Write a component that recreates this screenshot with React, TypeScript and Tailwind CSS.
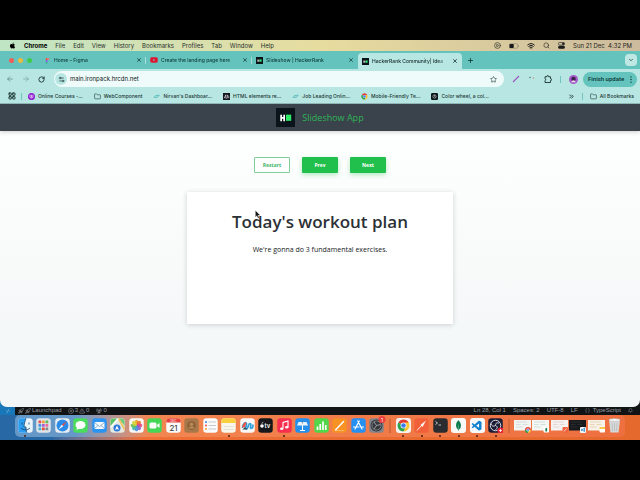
import type { ReactNode } from "react";
import {
    ArrowLeft,
    ArrowRight,
    Bell,
    Braces,
    ChevronDown,
    ChevronsRight,
    CirclePlay,
    CircleX,
    Folder,
    LayoutGrid,
    Plus,
    RadioTower,
    Rocket,
    RotateCw,
    Search,
    Settings2,
    Star,
    TriangleAlert,
    Wifi,
    X,
} from "lucide-react";
import { FaApple, FaYoutube } from "react-icons/fa";
import { SiMongodb } from "react-icons/si";
import { VscRemote, VscVscode } from "react-icons/vsc";

const menus = ["File", "Edit", "View", "History", "Bookmarks", "Profiles", "Tab", "Window", "Help"];

function HackerRankIcon({ className }: { className: string }) {
    return (
        <svg viewBox="0 0 20 20" className={className} aria-hidden="true">
            <rect width="20" height="20" fill="#0c141b" />
            <path d="M5.4 7v7M8.6 7v7M5 10.5h4" stroke="#fff" strokeWidth="1.8" fill="none" />
            <rect x="10.5" y="7" width="5.5" height="6.5" fill="#2eea67" />
        </svg>
    );
}

function FigmaIcon() {
    return (
        <svg viewBox="0 0 8 8" className="size-[7px] shrink-0" aria-hidden="true">
            <path d="M4 1H3a1.2 1.2 0 000 2.4h1z" fill="#f0503c" />
            <path d="M4 1h1a1.2 1.2 0 010 2.4H4z" fill="#f4727f" />
            <path d="M4 3.4H3a1.1 1.1 0 000 2.2h1z" fill="#8a5be8" />
            <circle cx="3" cy="6.6" r="1" fill="#35a97d" />
        </svg>
    );
}

function ChromeIcon({ className }: { className: string }) {
    return (
        <svg viewBox="0 0 24 24" className={className} aria-hidden="true">
            <path d="M12 12L2.5 6.5A11 11 0 0121.5 6.5z" fill="#e33b2e" />
            <path d="M2.5 6.5A11 11 0 0012 23l5-8-5-3z" fill="#2ba24c" />
            <path d="M21.5 6.5A11 11 0 0112 23l5-9-2-7.5z" fill="#fcc934" />
            <circle cx="12" cy="12" r="5.4" fill="#fff" />
            <circle cx="12" cy="12" r="4.2" fill="#3b7ded" />
        </svg>
    );
}

function Swoosh() {
    return (
        <svg viewBox="0 0 8 8" className="size-[7px] shrink-0" fill="none" aria-hidden="true">
            <path d="M1 5.5C2 2.5 4 3 7 2.5 6 5 4 5.2 2 5" stroke="#4fb9b8" />
        </svg>
    );
}

const tabs = [
    { title: "Home – Figma", icon: <FigmaIcon />, active: false },
    { title: "Create the landing page here", icon: <FaYoutube className="size-[8px] shrink-0 text-[#e0142f]" />, active: false },
    { title: "Slideshow | HackerRank", icon: <HackerRankIcon className="size-[7px] shrink-0" />, active: false },
    { title: "HackerRank Community| Idea", icon: <HackerRankIcon className="size-[7px] shrink-0" />, active: true },
];

const bookmarks = [
    {
        title: "Online Courses -...",
        icon: (
            <svg viewBox="0 0 8 8" className="size-[7px] shrink-0" aria-hidden="true">
                <circle cx="4" cy="4" r="4" fill="#8c1bd0" />
                <path d="M2.3 2v2a1.7 1.7 0 003.4 0V2M4 2v3" stroke="#fff" strokeWidth="0.8" fill="none" />
            </svg>
        ),
    },
    { title: "WebComponent", icon: <Folder className="size-[7px] shrink-0" /> },
    { title: "Nirvan's Dashboar...", icon: <Swoosh /> },
    {
        title: "HTML elements re...",
        icon: (
            <svg viewBox="0 0 8 8" className="size-[7px] shrink-0" aria-hidden="true">
                <rect width="8" height="8" fill="#15161c" />
                <path d="M1.4 6l1.8-4v4h1.2M5 6V2.2l1.6 2v1.8" stroke="#dde" strokeWidth="0.8" fill="none" />
            </svg>
        ),
    },
    { title: "Job Leading Onlin...", icon: <Swoosh /> },
    { title: "Mobile-Friendly Te...", icon: <ChromeIcon className="size-[7px] shrink-0" /> },
    {
        title: "Color wheel, a col...",
        icon: (
            <svg viewBox="0 0 8 8" className="size-[7px] shrink-0" aria-hidden="true">
                <rect width="8" height="8" rx="1.4" fill="#0d1417" />
                <circle cx="4" cy="4" r="1.9" fill="none" stroke="#c8d6d6" strokeWidth="0.7" />
                <path d="M4 2v2l1.5 1" stroke="#c8d6d6" strokeWidth="0.6" fill="none" />
            </svg>
        ),
    },
];

// rounded tile that every dock app is drawn on
function Tile({ fill, children }: { fill: string; children?: ReactNode }) {
    return (
        <svg viewBox="0 0 30 30" className="size-[15px]" aria-hidden="true">
            <rect x="0.5" y="0.5" width="29" height="29" rx="6.5" fill={fill} />
            {children}
        </svg>
    );
}

const launchpadColors = ["#e8504b", "#f2a03b", "#5dba55", "#4a90e2", "#a25bd0", "#ec6a9b", "#45b6c9", "#e84c3d", "#7f8c8d"];
const petals = ["#f6a21b", "#f06a2c", "#e2447e", "#9b59c9", "#4a87dd", "#3fb6b0", "#69bd4c", "#d8d43c"];

const apps = [
    {
        name: "Finder",
        running: true,
        icon: (
            <Tile fill="#e9f4fb">
                <path d="M16 .5H7A6.5 6.5 0 00.5 7v16A6.5 6.5 0 007 29.5h11c-2-4-2-8-2-11h-4c0-7 2-13 4-18z" fill="#2a9df0" />
                <path d="M8 9v4M22 9v4M6 20c5 5 13 5 18 0M16 1c-2 5-4 11-4 17h4c0 4 0 8 2 11" stroke="#16406b" strokeWidth="1.6" fill="none" />
            </Tile>
        ),
    },
    {
        name: "Launchpad",
        running: false,
        icon: (
            <Tile fill="#dfe4ea">
                {launchpadColors.map((color, i) => (
                    <rect key={color} x={5 + (i % 3) * 7} y={5 + Math.floor(i / 3) * 7} width="5.5" height="5.5" rx="1.2" fill={color} />
                ))}
            </Tile>
        ),
    },
    {
        name: "Safari",
        running: false,
        icon: (
            <Tile fill="#e8eef4">
                <circle cx="15" cy="15" r="12" fill="#2b8be8" />
                <path d="M23 7l-6.5 9.5-3-3z" fill="#ee4a3e" />
                <path d="M7 23l6.5-9.5 3 3z" fill="#fff" />
            </Tile>
        ),
    },
    {
        name: "Messages",
        running: false,
        icon: (
            <Tile fill="#4bdb5d">
                <ellipse cx="15" cy="14" rx="10" ry="8" fill="#fff" />
                <path d="M8 18l-1 6 6-3z" fill="#fff" />
            </Tile>
        ),
    },
    {
        name: "Mail",
        running: false,
        icon: (
            <Tile fill="#2b93f0">
                <rect x="5" y="8" width="20" height="14" rx="2" fill="#f5f8fb" />
                <path d="M5 9l10 8 10-8M5 21l7-6M25 21l-7-6" stroke="#5a93c9" strokeWidth="1.4" fill="none" />
            </Tile>
        ),
    },
    {
        name: "Maps",
        running: false,
        icon: (
            <Tile fill="#e5e9df">
                <path d="M1 7A6 6 0 017 1h7L1 16z" fill="#5cc467" />
                <path d="M18 1h5a6 6 0 016 6v9z" fill="#72c97a" />
                <path d="M17 1l12 22" stroke="#f3c04b" strokeWidth="3" />
                <path d="M1 19L16 2" stroke="#fff" strokeWidth="3" />
                <circle cx="14" cy="20" r="7" fill="#2c78dd" />
                <path d="M14 15l4 9-4-2-4 2z" fill="#fff" />
            </Tile>
        ),
    },
    {
        name: "Photos",
        running: false,
        icon: (
            <Tile fill="#f7f7f5">
                {petals.map((color, i) => (
                    <ellipse key={color} cx="15" cy="9" rx="3.8" ry="5.6" fill={color} opacity="0.88" transform={`rotate(${i * 45} 15 15)`} />
                ))}
            </Tile>
        ),
    },
    {
        name: "FaceTime",
        running: false,
        icon: (
            <Tile fill="#45d658">
                <rect x="5" y="9" width="14" height="12" rx="3" fill="#fff" />
                <path d="M20 14l5-4v10l-5-4z" fill="#fff" />
            </Tile>
        ),
    },
    {
        name: "Calendar",
        running: false,
        icon: (
            <Tile fill="#fafafa">
                <path d="M.5 9V7A6.5 6.5 0 017 .5h16A6.5 6.5 0 0129.5 7v2z" fill="#e5403b" />
                <text x="15" y="7.5" fontSize="6" textAnchor="middle" fill="#fff" fontFamily="Inter, sans-serif">DEC</text>
                <text x="15" y="25" fontSize="16" textAnchor="middle" fill="#333" fontFamily="Inter, sans-serif">21</text>
            </Tile>
        ),
    },
    {
        name: "Contacts",
        running: false,
        icon: (
            <Tile fill="#a9784a">
                <circle cx="15" cy="15" r="9" fill="#8e6238" />
                <circle cx="15" cy="12.5" r="3.4" fill="#b98b59" />
                <path d="M9 21c1-6 11-6 12 0z" fill="#b98b59" />
            </Tile>
        ),
    },
    {
        name: "Reminders",
        running: false,
        icon: (
            <Tile fill="#fbfbfb">
                <path d="M11 8h15M11 15h15M11 22h15" stroke="#b9bcc0" strokeWidth="1.6" />
                <circle cx="6" cy="8" r="2" fill="#3585ee" />
                <circle cx="6" cy="15" r="2" fill="#ec4b41" />
                <circle cx="6" cy="22" r="2" fill="#f3a33b" />
            </Tile>
        ),
    },
    {
        name: "Notes",
        running: true,
        icon: (
            <Tile fill="#f8f5ea">
                <path d="M.5 10V7A6.5 6.5 0 017 .5h16A6.5 6.5 0 0129.5 7v3z" fill="#f9cf3f" />
                <path d="M5 17h20M5 23h20" stroke="#d0cbbd" />
            </Tile>
        ),
    },
    {
        name: "Freeform",
        running: false,
        icon: (
            <Tile fill="#f8f8f8">
                <path d="M5 20c0-9 7-13 8-9s-4 11 0 11 3-11 7-11-1 10 2 10 4-3 4-8" stroke="#2f9fd8" strokeWidth="3.4" fill="none" />
                <path d="M4 19c1-8 6-12 9-10l-3 9z" fill="#e9574a" />
                <path d="M5 23l5-5 5 5z" fill="#3a4a5a" />
            </Tile>
        ),
    },
    {
        name: "TV",
        running: false,
        icon: (
            <Tile fill="#16171a">
                <circle cx="8" cy="16" r="3.6" fill="#fff" />
                <path d="M8 11.5c0-2 1-3 2.5-3" stroke="#fff" strokeWidth="1.4" fill="none" />
                <text x="13" y="20" fontSize="12" fontWeight="600" fill="#fff" fontFamily="Inter, sans-serif">tv</text>
            </Tile>
        ),
    },
    {
        name: "Music",
        running: true,
        icon: (
            <Tile fill="#f62f4f">
                <path d="M12 21V9l10-3v12" stroke="#fff" strokeWidth="2.2" fill="none" />
                <ellipse cx="9.5" cy="21.5" rx="3.3" ry="2.7" fill="#fff" />
                <ellipse cx="19.5" cy="18.5" rx="3.3" ry="2.7" fill="#fff" />
            </Tile>
        ),
    },
    {
        name: "Keynote",
        running: false,
        icon: (
            <Tile fill="#2490ed">
                <path d="M7 8h16l3 7H4z" fill="#e9f3fb" />
                <path d="M15 14v10M10 25h10" stroke="#fff" strokeWidth="2.2" />
                <path d="M15 6v5" stroke="#67788a" strokeWidth="1.6" />
            </Tile>
        ),
    },
    {
        name: "Numbers",
        running: false,
        icon: (
            <Tile fill="#52d64a">
                <path d="M7 24v-7M12.5 24V12M18 24V7M23.5 24V14" stroke="#fff" strokeWidth="3.4" />
            </Tile>
        ),
    },
    {
        name: "Pages",
        running: false,
        icon: (
            <Tile fill="#f79225">
                <path d="M7 24L23 7" stroke="#fff" strokeWidth="2.8" strokeLinecap="round" />
                <path d="M6 25h18" stroke="#fcc681" strokeWidth="1.4" />
            </Tile>
        ),
    },
    {
        name: "App Store",
        running: false,
        icon: (
            <Tile fill="#2590f2">
                <path d="M16.5 6L8 22M13.5 6L22 22M5 18h11M20 18h5" stroke="#fff" strokeWidth="2.4" strokeLinecap="round" />
            </Tile>
        ),
    },
    {
        name: "System Settings",
        running: false,
        icon: (
            <svg viewBox="0 0 30 30" className="size-[15px] overflow-visible" aria-hidden="true">
                <rect x="0.5" y="0.5" width="29" height="29" rx="6.5" fill="#81858b" />
                <circle cx="15" cy="15" r="12" fill="#34373b" />
                <circle cx="15" cy="15" r="9" fill="none" stroke="#a4a8ad" strokeWidth="2" strokeDasharray="2 1" />
                <path d="M15 15l8-2M15 15l-5 7M15 15l-5-7" stroke="#a4a8ad" strokeWidth="1.8" />
                <circle cx="26" cy="3" r="7" fill="#ea3d3c" />
                <text x="26" y="7" fontSize="10" textAnchor="middle" fill="#fff" fontFamily="Inter, sans-serif">1</text>
            </svg>
        ),
    },
];

const openApps = [
    {
        name: "Chrome",
        running: true,
        icon: (
            <div className="flex size-[15px] items-center justify-center rounded-[3px] bg-[#f4f3f1]">
                <ChromeIcon className="size-[13px]" />
            </div>
        ),
    },
    {
        name: "Postman",
        running: true,
        icon: (
            <Tile fill="#f2603a">
                <path d="M6 25l9-10" stroke="#fff" strokeWidth="1.8" />
                <path d="M13 14L24 5l-7 13z" fill="#fff" />
            </Tile>
        ),
    },
    {
        name: "Terminal",
        running: true,
        icon: (
            <Tile fill="#2a2c2f">
                <path d="M5 7l4 3-4 3M11 14h5" stroke="#e6e6e6" strokeWidth="1.6" fill="none" />
            </Tile>
        ),
    },
    {
        name: "MongoDB Compass",
        running: true,
        icon: (
            <div className="flex size-[15px] items-center justify-center rounded-[3px] bg-[#f8f8f6]">
                <SiMongodb className="size-[11px] text-[#0c7a4b]" />
            </div>
        ),
    },
    {
        name: "Visual Studio Code",
        running: true,
        icon: (
            <div className="flex size-[15px] items-center justify-center rounded-[3px] bg-[#f6f8fa]">
                <VscVscode className="size-[12px] text-[#1181cd]" />
            </div>
        ),
    },
    {
        name: "OBS",
        running: true,
        icon: (
            <Tile fill="#1c1d35">
                <circle cx="15" cy="15" r="10.5" fill="none" stroke="#d9dbe4" strokeWidth="2" />
                <path d="M15 15c0-5 4-7 7-4M15 15c5 2 4 7 0 8M15 15c-5 3-9 0-8-4" stroke="#d9dbe4" strokeWidth="2" fill="none" />
                <circle cx="25" cy="25" r="6" fill="#e52535" />
                <path d="M25 22v6M22 25h6" stroke="#fff" strokeWidth="1.6" />
            </Tile>
        ),
    },
];

// minimised windows, each with the badge of its app
function Thumb({ fill, line, badge }: { fill: string; line: string; badge: ReactNode }) {
    return (
        <svg viewBox="0 0 34 30" className="h-[15px] w-[17px] overflow-visible" aria-hidden="true">
            <rect y="4" width="34" height="21" fill={fill} />
            <path d="M4 8h22M4 13h9M17 13h10M4 18h13" stroke={line} strokeWidth="1.2" />
            {badge}
        </svg>
    );
}

const windows = [
    {
        name: "Chrome window",
        icon: (
            <Thumb fill="#f3f5f2" line="#c5cccc" badge={
                <g>
                    <circle cx="28" cy="24" r="6" fill="#e5473b" />
                    <path d="M22 24a6 6 0 006 6l3-6z" fill="#2ba24c" />
                    <path d="M28 30a6 6 0 006-6h-4z" fill="#fcc934" />
                    <circle cx="28" cy="24" r="2.6" fill="#3b7ded" stroke="#fff" />
                </g>
            } />
        ),
    },
    {
        name: "MongoDB Compass window",
        icon: (
            <Thumb fill="#f5f7f5" line="#b9cfc8" badge={
                <g>
                    <rect x="23" y="18" width="11" height="11" rx="2" fill="#fff" />
                    <ellipse cx="28.5" cy="23.5" rx="2" ry="4" fill="#17835a" />
                </g>
            } />
        ),
    },
    {
        name: "Postman window",
        icon: (
            <Thumb fill="#f5f3f1" line="#d9c5bd" badge={
                <g>
                    <rect x="23" y="18" width="11" height="11" rx="2" fill="#f2633d" />
                    <path d="M26 27l5-6" stroke="#fff" strokeWidth="1.4" />
                </g>
            } />
        ),
    },
    {
        name: "Code window",
        icon: (
            <Thumb fill="#17191c" line="#33373b" badge={
                <g>
                    <rect x="22" y="18" width="12" height="12" rx="2" fill="#f3f7fa" />
                    <path d="M24 22l7 5v-7l-7 6" stroke="#1b84c7" strokeWidth="1.6" fill="none" />
                </g>
            } />
        ),
    },
    {
        name: "Notes window",
        icon: (
            <Thumb fill="#f6f2ea" line="#e2bd86" badge={
                <g>
                    <rect x="23" y="18" width="11" height="11" rx="2" fill="#fff" />
                    <path d="M23 18h11v4H23z" fill="#f8c94a" />
                </g>
            } />
        ),
    },
];

function DockItem({ name, running, children }: { name: string; running?: boolean; children: ReactNode }) {
    return (
        <button aria-label={name} className="flex min-w-0 flex-1 flex-col items-center gap-[2px] pt-[3px]">
            {children}
            <span className={running ? "size-[2px] rounded-full bg-[#4c1d12]" : "size-[2px]"} />
        </button>
    );
}

function MenuBar() {
    return (
        <div className="flex h-[11px] items-center bg-linear-to-r from-[#bfe5c5] via-[#e7dc9f] to-[#cdbb9d] pr-2 pl-[9px] text-[6px] leading-none text-[#27302c]">
            <FaApple className="mr-2 size-[7px] text-black" />
            <nav className="flex items-center gap-2">
                <span className="font-bold text-black">Chrome</span>
                {menus.map((menu) => (
                    <span key={menu}>{menu}</span>
                ))}
            </nav>
            <div className="ml-auto flex items-center gap-2 text-[#1d1f1f]">
                <CirclePlay className="size-[7px]" />
                <svg viewBox="0 0 20 12" className="h-[6px] w-[10px]" fill="none" aria-hidden="true">
                    <rect x="0.5" y="1.5" width="17" height="9" rx="2.5" stroke="#7d7767" />
                    <rect x="1" y="2" width="8.5" height="8" rx="1.5" fill="#17191a" />
                    <path d="M19 4.500v3" stroke="#7d7767" strokeWidth="1.4" />
                </svg>
                <Wifi className="size-[8px]" strokeWidth={3} />
                <Search className="size-[7px]" />
                <svg viewBox="0 0 14 14" className="size-[7px]" fill="none" stroke="currentColor" aria-hidden="true">
                    <rect x="0.7" y="1" width="12.6" height="5" rx="2.5" strokeWidth="1.2" />
                    <rect x="0.7" y="8" width="12.6" height="5" rx="2.5" fill="currentColor" strokeWidth="1.2" />
                    <circle cx="10.500" cy="3.500" r="1.8" fill="currentColor" />
                </svg>
                <span className="whitespace-pre">Sun 21 Dec  4:32 PM</span>
            </div>
        </div>
    );
}

function TabStrip() {
    return (
        <div className="flex h-[18px] items-end bg-[#64c3bd] pr-[3px] pl-[9px] text-[5px] text-[#12403e]">
            <div className="mr-[8px] flex h-[18px] items-center gap-[4px]">
                <span className="size-[5px] rounded-full bg-[#ee5f58]" />
                <span className="size-[5px] rounded-full bg-[#efb93c]" />
                <span className="size-[5px] rounded-full bg-[#3ecb4a]" />
            </div>
            {tabs.map((tab, i) => (
                <div
                    key={tab.title}
                    className={
                        tab.active
                            ? "flex h-[16px] w-[104px] items-center gap-[3px] rounded-t-[4px] bg-[#b8e6e2] px-[4px] text-[#122b2a]"
                            : "flex h-[18px] w-[106px] items-center gap-[3px] px-[4px]"
                    }
                >
                    {tab.icon}
                    <span className="min-w-0 flex-1 overflow-hidden mask-r-from-85% leading-[8px] font-medium whitespace-nowrap">{tab.title}</span>
                    <button aria-label="Close tab">
                        <X className="size-[6px]" strokeWidth={3} />
                    </button>
                    {i < 2 && <span className="-mr-[4px] h-[7px] w-px bg-[#a5dcd8]" />}
                </div>
            ))}
            <button aria-label="New tab" className="ml-[5px] self-center">
                <Plus className="size-[7px]" strokeWidth={3} />
            </button>
            <button aria-label="Search tabs" className="ml-auto flex size-[12px] items-center justify-center self-center rounded-[4px] bg-[#bfe8e4]">
                <ChevronDown className="size-[6px]" strokeWidth={3} />
            </button>
        </div>
    );
}

function Toolbar() {
    return (
        <div className="flex h-[20px] items-center bg-[#b8e6e2] pr-[3px] pl-[6px] text-[#17302f]">
            <div className="flex items-center gap-[8px]">
                <button aria-label="Back"><ArrowLeft className="size-[8px] text-[#55807d]" /></button>
                <button aria-label="Forward"><ArrowRight className="size-[8px] text-[#6f9d99]" /></button>
                <button aria-label="Reload"><RotateCw className="size-[7px]" strokeWidth={3} /></button>
            </div>
            <div className="ml-[9px] flex h-[16px] flex-1 items-center gap-[3px] rounded-full bg-[#eefbfa] pr-[7px] pl-[1px]">
                <span className="flex size-[12px] items-center justify-center rounded-full bg-[#b8e6e2]">
                    <Settings2 className="size-[7px]" />
                </span>
                <input
                    aria-label="Address"
                    defaultValue="main.ironpack.hrcdn.net"
                    className="h-[10px] min-w-0 flex-1 bg-transparent text-[6px] leading-[10px] text-[#101918] outline-none"
                />
                <button aria-label="Bookmark this page"><Star className="size-[7px]" /></button>
            </div>
            <div className="mr-[5px] ml-[8px] flex items-center gap-[8px]">
                <svg viewBox="0 0 8 8" className="size-[8px]" aria-hidden="true">
                    <path d="M1 7L7 1" stroke="#9a52bd" strokeWidth="1.1" />
                </svg>
                <svg viewBox="0 0 8 8" className="size-[8px]" aria-hidden="true">
                    <circle cx="2" cy="2.5" r="0.8" fill="#547b79" />
                    <circle cx="5.5" cy="3" r="0.7" fill="#d58a6a" />
                </svg>
                <svg viewBox="0 0 16 16" className="size-[8px]" fill="none" aria-hidden="true">
                    <path d="M2 3.500h4v-1a1.500 1.500 0 013 0v1h4v4h.500a1.500 1.500 0 010 3.500H13v4H2v-4a1.800 1.800 0 000-3.500z" stroke="currentColor" strokeWidth="1.8" strokeLinejoin="round" />
                </svg>
                <span className="h-[7px] w-px bg-[#6fc4bf]" />
                <svg viewBox="0 0 10 10" className="size-[9px]" aria-hidden="true">
                    <circle cx="5" cy="5" r="5" fill="#a65bc9" />
                    <circle cx="5" cy="4.5" r="2.5" fill="#3b2452" />
                    <path d="M2.5 8c1-3 4-3 5 0z" fill="#f1dcee" />
                </svg>
            </div>
            <button className="flex h-[15px] w-[54px] items-center justify-between rounded-full bg-[#64c3bd] px-[5px] font-[Roboto,sans-serif] text-[6px] leading-[8px] font-medium text-[#0b3432]">
                <span>Finish update</span>
                <svg viewBox="0 0 2 8" className="h-[7px] w-[2px]" fill="currentColor" aria-hidden="true">
                    <circle cx="1" cy="1" r="0.8" />
                    <circle cx="1" cy="4" r="0.8" />
                    <circle cx="1" cy="7" r="0.8" />
                </svg>
            </button>
        </div>
    );
}

function BookmarksBar() {
    return (
        <div className="flex h-[15px] items-center border-b border-[#8fb5b4] bg-[#b8e6e2] pr-[6px] pl-[8px] text-[5px] leading-[8px] font-medium whitespace-nowrap text-[#1b3735]">
            <LayoutGrid className="size-[8px]" strokeWidth={3} />
            <span className="mr-[6px] ml-[5px] h-[7px] w-px bg-[#6fc4bf]" />
            <div className="flex items-center gap-[11px]">
                {bookmarks.map((bookmark) => (
                    <a key={bookmark.title} href="#" className="flex items-center gap-[3px]">
                        {bookmark.icon}
                        {bookmark.title}
                    </a>
                ))}
            </div>
            <ChevronsRight className="ml-auto size-[7px]" strokeWidth={3} />
            <span className="mx-[7px] h-[7px] w-px bg-[#6fc4bf]" />
            <a href="#" className="flex items-center gap-[3px]">
                <Folder className="size-[7px]" />
                All Bookmarks
            </a>
        </div>
    );
}

function Slideshow() {
    const solid = "h-4 w-9 rounded-[1px] bg-[#21bf4b] text-white shadow-[0_2px_5px_#21bf4b55]";

    return (
        <div className="flex flex-1 flex-col overflow-hidden rounded-b-[7px] bg-linear-to-b from-white to-[#f2f6f6] font-['Open_Sans',sans-serif]">
            <header className="flex h-[27px] items-center justify-center gap-[7px] bg-[#3a424c] shadow-[0_1px_4px_#3a424c44]">
                <HackerRankIcon className="size-[19px]" />
                <h1 className="text-[9px] leading-[12px] font-medium text-[#2fb457]">Slideshow App</h1>
            </header>
            <main className="flex flex-col items-center pt-[26px]">
                <div className="flex gap-3 text-[5px] leading-[8px] font-bold">
                    <button className="h-4 w-9 rounded-[1px] border border-[#7fcf98] bg-white text-[#43b568]">Restart</button>
                    <button className={solid}>Prev</button>
                    <button className={solid}>Next</button>
                </div>
                <section className="relative mt-[19px] min-h-[132px] w-[266px] bg-white pt-[18px] text-center shadow-[0_1px_5px_#20303033]">
                    <h2 className="text-[17px] leading-[24px] font-semibold text-[#2c3136]">Today's workout plan</h2>
                    <p className="mt-[11px] text-[7px] leading-[10px] text-[#16191b]">We're gonna do 3 fundamental exercises.</p>
                    <svg viewBox="0 0 8 12" className="absolute top-[18px] left-[68px] h-[9px] w-[6px]" aria-hidden="true">
                        <path d="M.5.5v9l2-2 1.6 3.6 1.5-.7L4 7h3z" fill="#14171a" stroke="#fff" strokeWidth="0.4" />
                    </svg>
                </section>
            </main>
        </div>
    );
}

function StatusBar() {
    return (
        <footer className="flex h-[8px] items-center justify-between pr-[7px] pb-px font-['Liberation_Sans',sans-serif] text-[6px] leading-[7px] text-[#9b9fa2]">
            <div className="flex items-center">
                <span className="flex w-[15px] justify-center text-[#9bd0f5]"><VscRemote className="size-[6px]" /></span>
                <Rocket className="mr-[1px] ml-[3px] size-[6px]" />
                <Rocket className="mr-[1px] size-[6px]" />
                <span className="mr-[6px]">Launchpad</span>
                <CircleX className="mr-[1px] size-[6px]" />
                <span className="mr-[1px]">3</span>
                <TriangleAlert className="mr-[1px] size-[6px]" />
                <span className="mr-[7px]">0</span>
                <RadioTower className="mr-[1px] size-[6px]" />
                <span>0</span>
            </div>
            <div className="flex items-center gap-[7px]">
                <span>Ln 28, Col 1</span>
                <span>Spaces: 2</span>
                <span>UTF-8</span>
                <span>LF</span>
                <span className="flex items-center gap-[3px]"><Braces className="size-[5px]" />TypeScript</span>
                <Bell className="size-[5px]" />
            </div>
        </footer>
    );
}

function Dock() {
    return (
        <div className="bg-linear-to-r from-[#2868a5] from-8% via-[#ef6f36] via-22% to-[#e5682c] px-[15px] pb-[3px]">
            <div className="flex h-[22px] rounded-[5px] bg-linear-to-r from-[#6698c7] from-10% via-[#f28650] via-22% to-[#ee6f40] px-px">
                <div className="flex flex-20">
                    {apps.map((app) => (
                        <DockItem key={app.name} name={app.name} running={app.running}>{app.icon}</DockItem>
                    ))}
                </div>
                <span className="mx-[3px] my-[4px] w-[2px] bg-[#d5683d]" />
                <div className="flex flex-6">
                    {openApps.map((app) => (
                        <DockItem key={app.name} name={app.name} running={app.running}>{app.icon}</DockItem>
                    ))}
                </div>
                <span className="mx-[3px] my-[4px] w-[2px] bg-[#d5683d]" />
                <div className="flex flex-6">
                    {windows.map((item) => (
                        <DockItem key={item.name} name={item.name}>{item.icon}</DockItem>
                    ))}
                    <DockItem name="Trash">
                        <svg viewBox="0 0 24 30" className="h-[16px] w-[13px]" aria-hidden="true">
                            <path d="M1 3h22l-3 26H4z" fill="#d8d9da" />
                            <ellipse cx="12" cy="4" rx="11" ry="3" fill="#f4f4f3" stroke="#a9abad" />
                            <path d="M7 10l1 16M12 10v16M17 10l-1 16" stroke="#b4b6b8" strokeWidth="1.4" />
                        </svg>
                    </DockItem>
                </div>
            </div>
        </div>
    );
}

export default function App() {
    return (
        <div className="flex min-h-screen flex-col bg-black py-10 font-[Inter,sans-serif]">
            <MenuBar />
            <div className="flex flex-1 flex-col bg-[linear-gradient(to_right,#1777b8_15px,#111315_15px)]">
                <TabStrip />
                <Toolbar />
                <BookmarksBar />
                <Slideshow />
                <StatusBar />
            </div>
            <Dock />
        </div>
    );
}
